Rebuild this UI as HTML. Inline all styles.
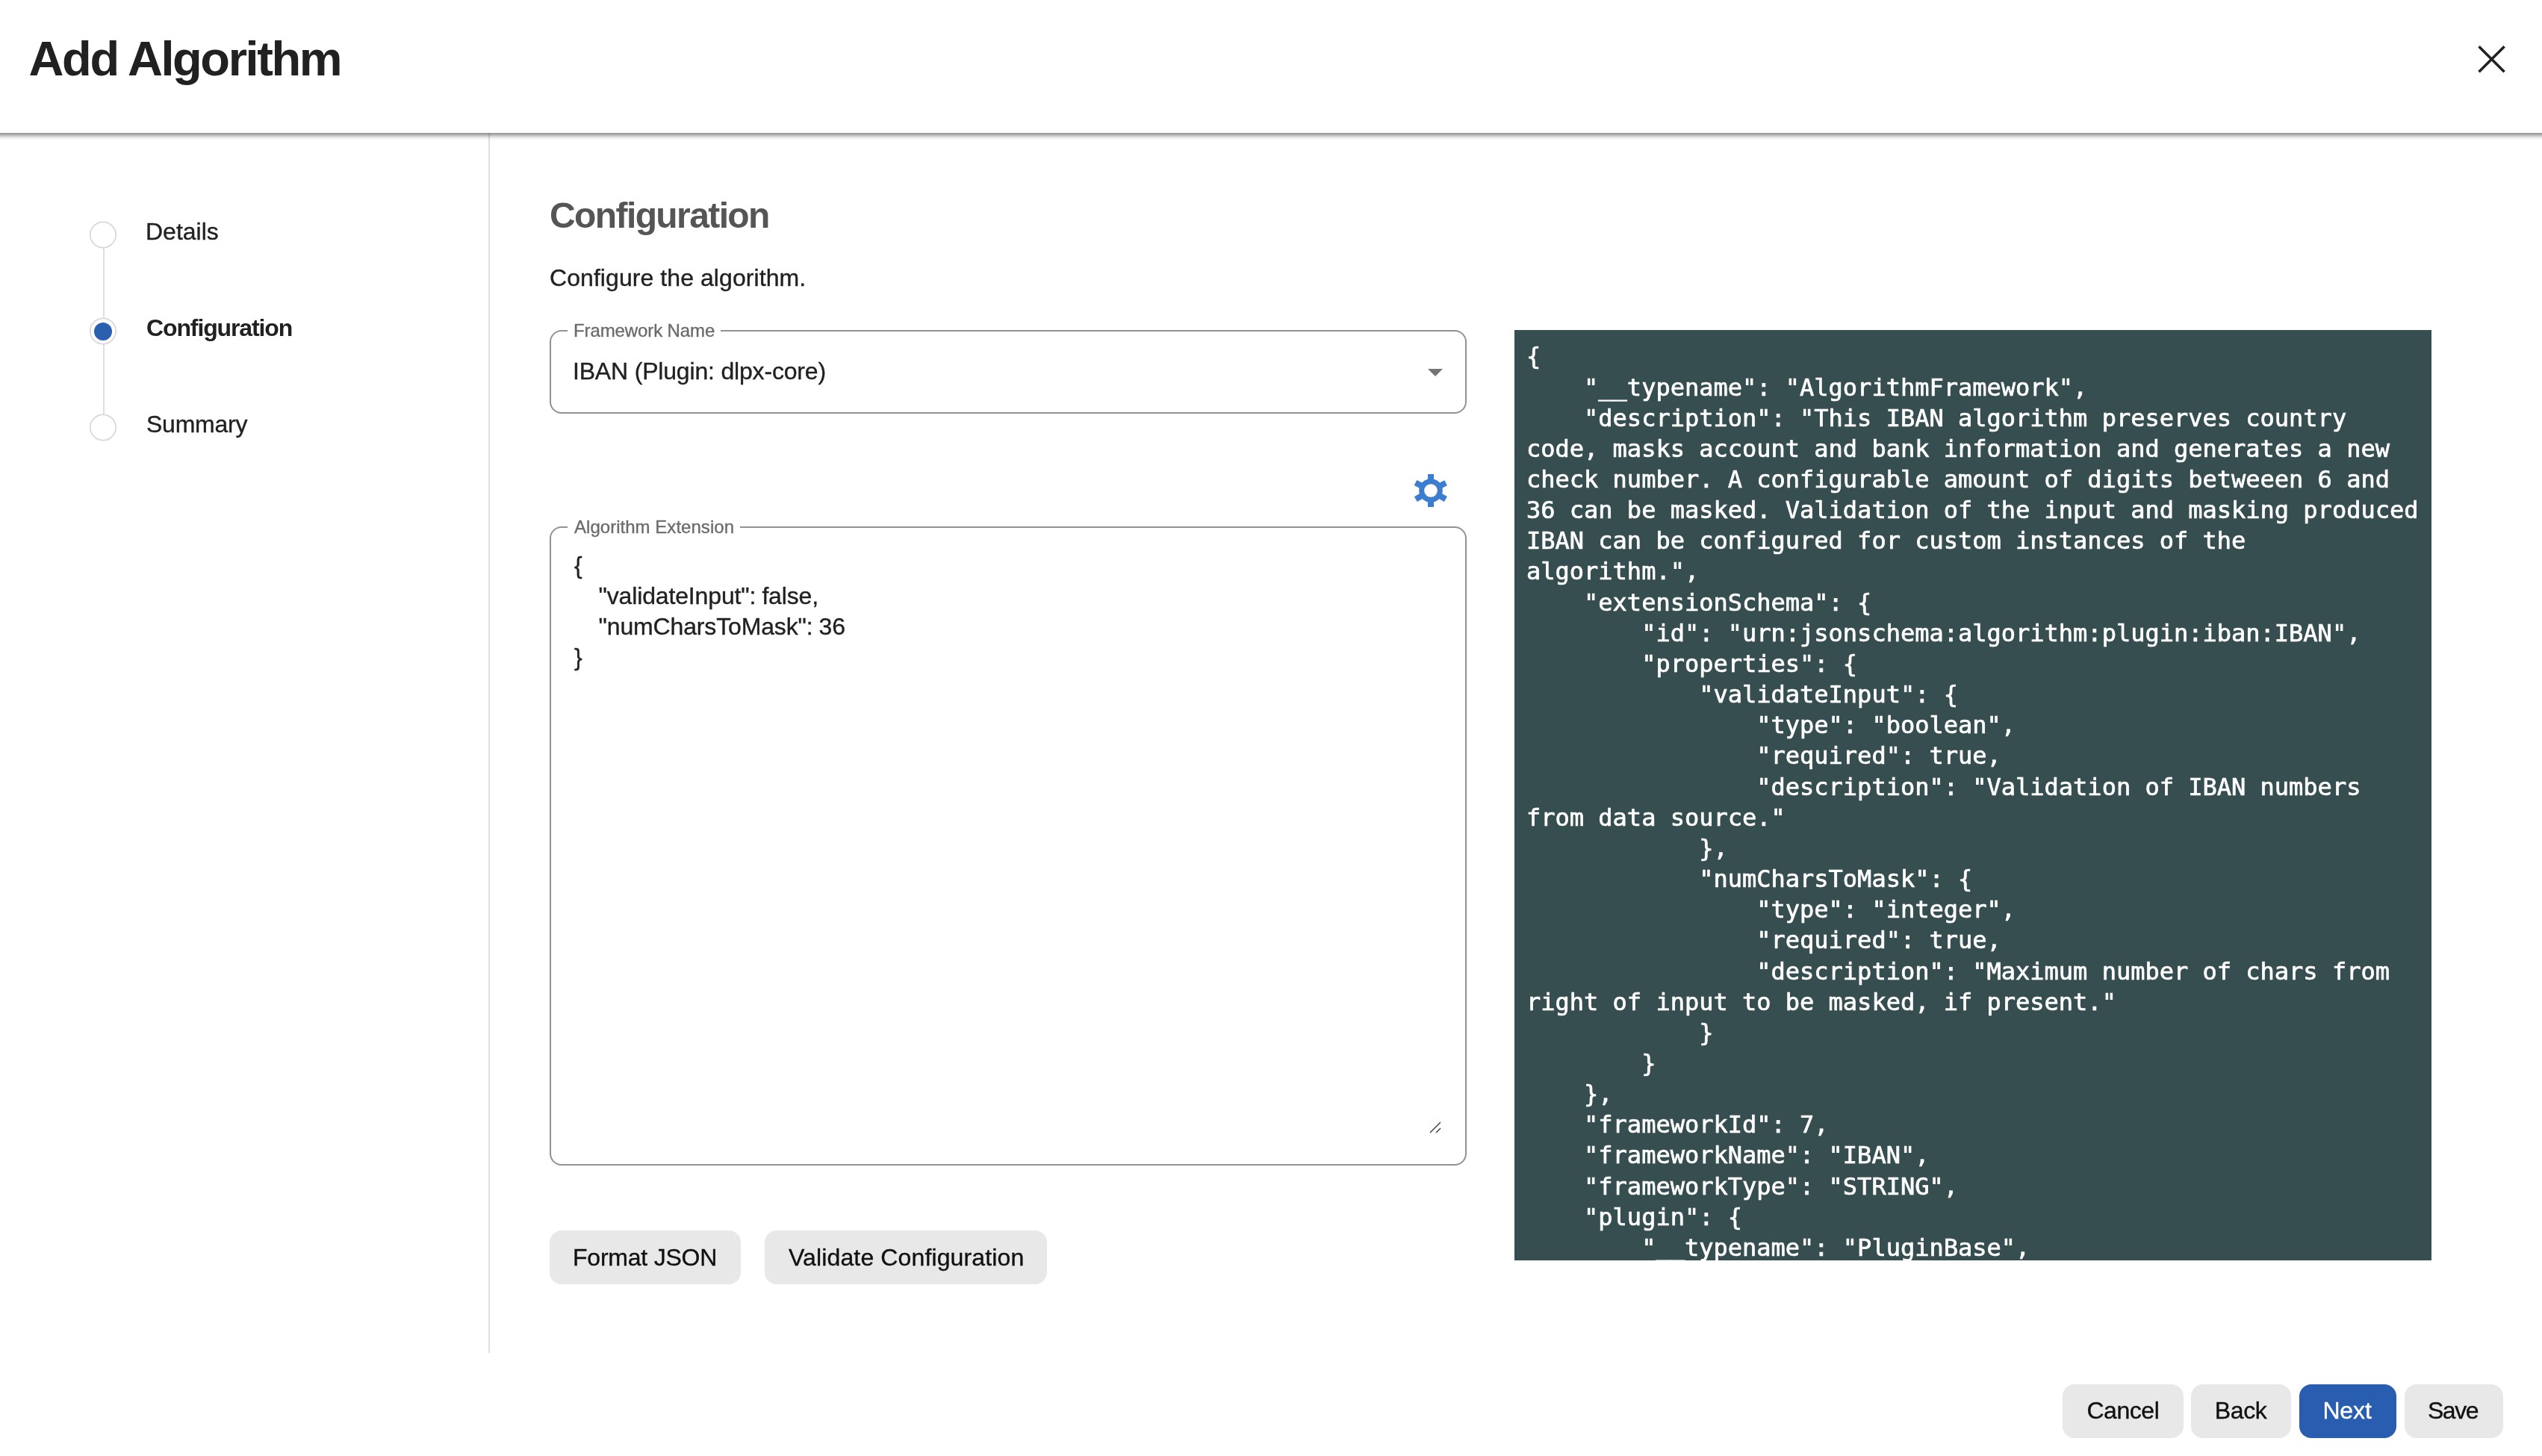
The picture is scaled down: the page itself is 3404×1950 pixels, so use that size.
<!DOCTYPE html>
<html lang="en">
<head>
<meta charset="utf-8">
<title>Add Algorithm</title>
<style>
html,body{margin:0;padding:0;background:#fff;}
@media (max-width:2000px){html{zoom:.5;}}
body{width:3404px;height:1950px;position:relative;overflow:hidden;font-family:"Liberation Sans",sans-serif;color:#212121;}
.abs{position:absolute;}
.t{position:absolute;white-space:pre;line-height:1;margin:0;padding:0;-webkit-text-stroke:0.35px currentColor;}
.hdr{left:0;top:0;width:3404px;height:178px;background:#fff;}
.hshadow{left:0;top:178px;width:3404px;height:10px;background:linear-gradient(to bottom,rgba(0,0,0,.43) 0,rgba(0,0,0,.38) 1px,rgba(0,0,0,.27) 3px,rgba(0,0,0,.15) 5px,rgba(0,0,0,.06) 7px,rgba(0,0,0,.015) 9px,rgba(0,0,0,0) 10px);}
.divider{left:654px;top:178px;width:2px;height:1634px;background:rgba(0,0,0,.12);}
.dot{width:24px;height:24px;border-radius:50%;background:#2b5fb0;}
.conn{width:2px;background:#dedede;}
.fs{box-sizing:border-box;border:2px solid #929292;border-radius:16px;}
.legend{background:#fff;color:#6b6b6b;font-size:24px;}
.btn{box-sizing:border-box;height:72px;border-radius:16px;background:#e8e8e8;}
.btn.primary{background:#295db0;}
.bt{font-size:32px;color:#111;}
.code{left:2028px;top:442px;width:1228px;height:1246px;box-sizing:border-box;margin:0;padding:15.4px 16px 0 16px;background:#364e50;color:#fff;font-family:"DejaVu Sans Mono","Liberation Mono",monospace;font-size:32px;line-height:41.16px;white-space:pre;overflow:hidden;-webkit-text-stroke:0.7px #fff;}
.ta{-webkit-text-stroke:0.35px currentColor;left:769px;top:736.6px;word-spacing:-0.6px;margin:0;font-family:"Liberation Sans",sans-serif;font-size:32px;line-height:41.14px;white-space:pre;color:#212121;letter-spacing:-0.15px;}
</style>
</head>
<body>
<div id="root" style="position:absolute;left:0;top:0;width:3404px;height:1950px;will-change:transform;">
<!-- header -->
<div class="abs hdr"></div>
<div class="abs hshadow"></div>
<div class="t" id="title" style="left:38.6px;top:45.5px;font-size:65px;font-weight:bold;-webkit-text-stroke:0;letter-spacing:-2.42px;color:#212121;">Add Algorithm</div>
<svg class="abs" style="left:3312px;top:55px;" width="48" height="48" viewBox="0 0 48 48"><path d="M7.5 7.2 L41.6 41.3 M41.6 7.2 L7.5 41.3" stroke="#222" stroke-width="3.6" fill="none"/></svg>

<!-- sidebar -->
<div class="abs divider"></div>
<div class="abs conn" style="left:138px;top:332px;height:95px;"></div>
<div class="abs conn" style="left:138px;top:461px;height:95px;"></div>
<svg class="abs" style="left:118px;top:294px;" width="40" height="40" viewBox="0 0 40 40"><circle cx="19.96" cy="20.5" r="17.2" fill="#fff" stroke="#d8d8d8" stroke-width="1.7"/></svg>
<svg class="abs" style="left:118px;top:423px;" width="40" height="40" viewBox="0 0 40 40"><circle cx="19.96" cy="20.5" r="17.2" fill="#fff" stroke="#d8d8d8" stroke-width="1.7"/></svg>
<div class="abs dot" style="left:126px;top:431.5px;"></div>
<svg class="abs" style="left:118px;top:552px;" width="40" height="40" viewBox="0 0 40 40"><circle cx="19.96" cy="20.5" r="17.2" fill="#fff" stroke="#d8d8d8" stroke-width="1.7"/></svg>
<div class="t" id="s1" style="left:195px;top:293.6px;font-size:32px;letter-spacing:0px;">Details</div>
<div class="t" id="s2" style="left:196px;top:423.2px;font-size:32px;font-weight:bold;-webkit-text-stroke:0;letter-spacing:-1.12px;">Configuration</div>
<div class="t" id="s3" style="left:196px;top:551.8px;font-size:32px;letter-spacing:-0.25px;">Summary</div>

<!-- main -->
<div class="t" id="h2" style="left:736px;top:265.1px;font-size:48px;font-weight:bold;-webkit-text-stroke:0;letter-spacing:-1.6px;color:#555;">Configuration</div>
<div class="t" id="p1" style="left:736px;top:356px;font-size:32px;letter-spacing:0.07px;">Configure the algorithm.</div>

<div class="abs fs" style="left:736px;top:442px;width:1228px;height:112px;"></div>
<div class="abs legend" style="left:760px;top:428px;width:205px;height:30px;"></div>
<div class="t" id="l1" style="left:768px;top:430.8px;font-size:24px;color:#6b6b6b;letter-spacing:-0.11px;">Framework Name</div>
<div class="t" id="sel" style="left:767px;top:481.1px;font-size:32px;letter-spacing:-0.18px;">IBAN (Plugin: dlpx-core)</div>
<svg class="abs" style="left:1912px;top:494px;" width="20" height="10" viewBox="0 0 20 10"><path d="M0 0 H20 L10 10 Z" fill="#757575"/></svg>

<svg class="abs" id="gear" style="left:1892px;top:633px;" width="48" height="48" viewBox="-24 -24 48 48">
<g fill="#3b7ed0">
<rect x="-4" y="-22" width="8" height="10"/><rect x="-4" y="12" width="8" height="10"/>
<rect x="-4" y="-22.6" width="8" height="10.6" transform="rotate(63)"/>
<rect x="-4" y="-23" width="8" height="11" transform="rotate(120)"/>
<rect x="-4" y="-23.3" width="8" height="11.3" transform="rotate(240)"/>
<rect x="-4" y="-23" width="8" height="11" transform="rotate(297)"/>
</g>
<circle cx="0" cy="0" r="12.35" fill="none" stroke="#3b7ed0" stroke-width="7"/>
</svg>

<div class="abs fs" style="left:736px;top:705px;width:1228px;height:856px;"></div>
<div class="abs legend" style="left:760px;top:691px;width:231px;height:30px;"></div>
<div class="t" id="l2" style="left:769px;top:694px;font-size:24px;color:#6b6b6b;letter-spacing:0.03px;">Algorithm Extension</div>
<pre class="abs ta" id="ta">{
    "validateInput": false,
    "numCharsToMask": 36
}</pre>
<svg class="abs" style="left:1912px;top:1500px;" width="20" height="20" viewBox="0 0 20 20"><path d="M3 17 L17 3 M11 17 L17 11" stroke="#444" stroke-width="1.5" fill="none"/></svg>

<div class="abs btn" style="left:736px;top:1648px;width:256px;"></div>
<div class="t bt" id="b1" style="left:767px;top:1667.9px;letter-spacing:-0.22px;">Format JSON</div>
<div class="abs btn" style="left:1024px;top:1648px;width:378px;"></div>
<div class="t bt" id="b2" style="left:1056px;top:1667.9px;letter-spacing:0.13px;">Validate Configuration</div>

<!-- code panel -->
<pre class="abs code" id="code">{
    "__typename": "AlgorithmFramework",
    "description": "This IBAN algorithm preserves country 
code, masks account and bank information and generates a new 
check number. A configurable amount of digits betweeen 6 and 
36 can be masked. Validation of the input and masking produced 
IBAN can be configured for custom instances of the 
algorithm.",
    "extensionSchema": {
        "id": "urn:jsonschema:algorithm:plugin:iban:IBAN",
        "properties": {
            "validateInput": {
                "type": "boolean",
                "required": true,
                "description": "Validation of IBAN numbers 
from data source."
            },
            "numCharsToMask": {
                "type": "integer",
                "required": true,
                "description": "Maximum number of chars from 
right of input to be masked, if present."
            }
        }
    },
    "frameworkId": 7,
    "frameworkName": "IBAN",
    "frameworkType": "STRING",
    "plugin": {
        "__typename": "PluginBase",</pre>

<!-- footer -->
<div class="abs btn" style="left:2762px;top:1854px;width:162px;"></div>
<div class="t bt" id="f1" style="left:2794.4px;top:1873px;letter-spacing:-0.44px;">Cancel</div>
<div class="abs btn" style="left:2934px;top:1854px;width:134px;"></div>
<div class="t bt" id="f2" style="left:2965.8px;top:1873px;letter-spacing:-0.4px;">Back</div>
<div class="abs btn primary" style="left:3079px;top:1854px;width:130px;"></div>
<div class="t bt" id="f3" style="left:3110.4px;top:1873px;letter-spacing:-0.13px;color:#fff;">Next</div>
<div class="abs btn" style="left:3220px;top:1854px;width:132px;"></div>
<div class="t bt" id="f4" style="left:3251px;top:1873px;letter-spacing:-1.48px;">Save</div>
</div>
</body>
</html>
